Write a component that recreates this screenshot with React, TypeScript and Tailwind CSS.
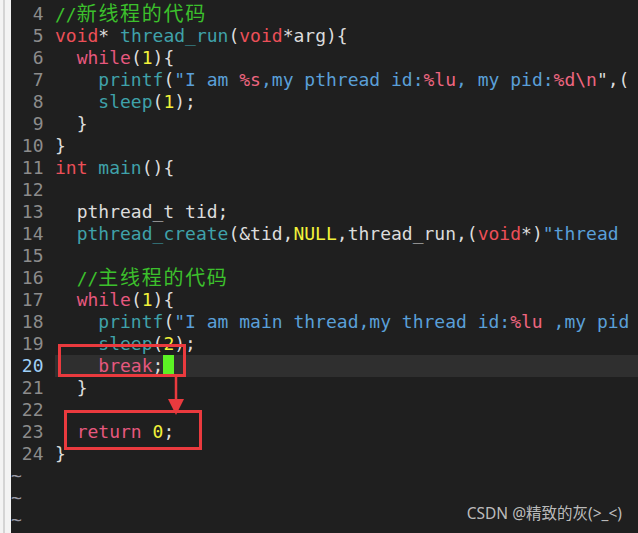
type Tok = [string, string];

const W = "text-[#dcdcdc]";
const KW = "text-[#ec4f58]";
const CT = "text-[#e6587e]";
const FN = "text-[#3fa2aa]";
const ST = "text-[#5a9fd8]";
const FM = "text-[#ee6680]";
const NU = "text-[#f2f23a]";
const CM = "text-[#3cc02c]";
const CJ = "text-[#3cc02c] text-[20px] tracking-[1.7px]";

const lines: { n: number; toks: Tok[] }[] = [
  { n: 4, toks: [["//", CM], ["新线程的代码", CJ]] },
  { n: 5, toks: [["void", KW], ["* ", W], ["thread_run", FN], ["(", W], ["void", KW], ["*arg){", W]] },
  { n: 6, toks: [["  ", W], ["while", CT], ["(", W], ["1", NU], ["){", W]] },
  {
    n: 7,
    toks: [
      ["    ", W], ["printf", FN], ["(", W], ['"I am ', ST], ["%s", FM], [",my pthread id:", ST], ["%lu", FM],
      [", my pid:", ST], ["%d\\n", FM], ['",(', W],
    ],
  },
  { n: 8, toks: [["    ", W], ["sleep", FN], ["(", W], ["1", NU], [");", W]] },
  { n: 9, toks: [["  }", W]] },
  { n: 10, toks: [["}", W]] },
  { n: 11, toks: [["int", KW], [" ", W], ["main", FN], ["(){", W]] },
  { n: 12, toks: [] },
  { n: 13, toks: [["  pthread_t tid;", W]] },
  {
    n: 14,
    toks: [
      ["  ", W], ["pthread_create", FN], ["(&tid,", W], ["NULL", NU], [",thread_run,(", W], ["void", KW], ["*)", W],
      ['"thread ', ST],
    ],
  },
  { n: 15, toks: [] },
  { n: 16, toks: [["  //", CM], ["主线程的代码", CJ]] },
  { n: 17, toks: [["  ", W], ["while", CT], ["(", W], ["1", NU], ["){", W]] },
  {
    n: 18,
    toks: [
      ["    ", W], ["printf", FN], ["(", W], ['"I am main thread,my thread id:', ST], ["%lu", FM], [" ,my pid", ST],
    ],
  },
  { n: 19, toks: [["    ", W], ["sleep", FN], ["(", W], ["2", NU], [");", W]] },
  { n: 20, toks: [["    ", W], ["break", CT], [";", W]] },
  { n: 21, toks: [["  }", W]] },
  { n: 22, toks: [] },
  { n: 23, toks: [["  ", W], ["return", CT], [" ", W], ["0", NU], [";", W]] },
  { n: 24, toks: [["}", W]] },
];

export default function App() {
  return (
    <div
      className="relative w-[638px] h-[533px] overflow-hidden bg-[#1f1f1f] flex"
      style={{ fontFamily: '"DejaVu Sans Mono", "Noto Sans CJK SC", monospace' }}
    >
      {/* left window edge */}
      <div className="w-[11px] h-full bg-[#f3f3f3] flex">
        <div className="w-[3px]" />
        <div className="w-[2px] bg-[#d4d4d4]" />
      </div>

      <div className="flex-1 flex flex-col pt-[3px] text-[18px] leading-[22px] whitespace-pre">
        {lines.map((l) => {
          const cur = l.n === 20;
          return (
            <div key={l.n} className="flex h-[22px]">
              <span className={`w-[44px] shrink-0 ${cur ? "text-[#9fd0f7]" : "text-[#8c8c8c]"}`}>
                {String(l.n).padStart(3, " ") + " "}
              </span>
              <span className={`flex-1 flex items-baseline ${cur ? "bg-[#2f2f2f]" : ""}`}>
                {l.toks.map((t, i) => (
                  <span key={i} className={`${t[1]} leading-[22px]`}>
                    {t[0]}
                  </span>
                ))}
                {cur && <span className="self-stretch w-[11px] bg-[#5cf224]" />}
              </span>
            </div>
          );
        })}
        {[0, 1, 2].map((i) => (
          <div key={i} className="h-[22px] text-[#9a9aa6]">
            ~
          </div>
        ))}
      </div>

      {/* annotations */}
      <div className="absolute left-[58px] top-[344px] w-[128px] h-[33px] border-[3px] border-[#ea3a3e]" />
      <div className="absolute left-[64px] top-[410px] w-[138px] h-[40px] border-[3px] border-[#ea3a3e]" />
      <svg className="absolute left-[160px] top-[376px]" width="32" height="40" viewBox="0 0 32 40">
        <line x1="16" y1="1" x2="16" y2="25" stroke="#ea3a3e" strokeWidth="2.5" />
        <polygon points="8,23 24,23 16,39" fill="#ea3a3e" />
      </svg>

      <div
        className="absolute right-[16px] bottom-[8px] text-[15.5px] text-[#cfcfcf]/90"
        style={{ fontFamily: '"Noto Sans", "Noto Sans CJK SC", sans-serif' }}
      >
        CSDN @精致的灰(&gt;_&lt;)
      </div>
    </div>
  );
}
